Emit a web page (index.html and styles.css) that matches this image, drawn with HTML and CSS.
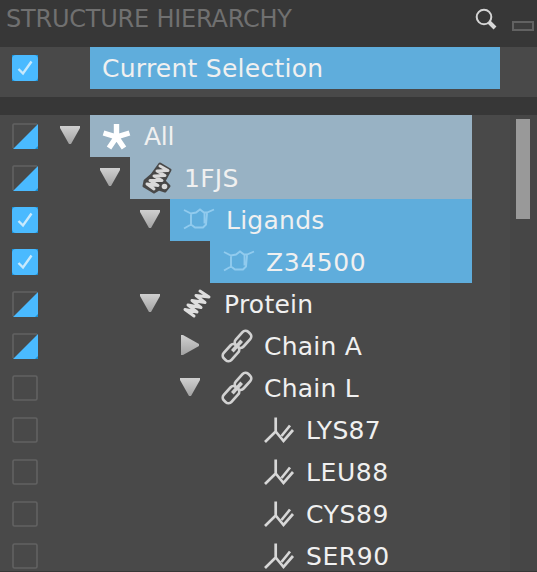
FILE: index.html
```
<!DOCTYPE html>
<html lang="en">
<head>
<meta charset="utf-8">
<title>Structure Hierarchy</title>
<link rel="stylesheet" href="styles.css">
</head>
<body>
<svg class="defs" width="0" height="0" aria-hidden="true">
  <defs>
    <linearGradient id="metal" x1="0" y1="0" x2="0" y2="1"><stop offset="0" stop-color="#d0d0d0"/><stop offset="1" stop-color="#a2a2a2"/></linearGradient>
    <symbol id="on" viewBox="0 0 26 26"><path fill="#168fd5" d="M0 0h26v26H0z"/><rect width="26" height="26" rx="4" fill="#4abaff"/><path d="M6.500 14l4.500 4.500L19.500 6.500" fill="none" stroke="#c8e9fc" stroke-width="2.400"/></symbol>
    <symbol id="off" viewBox="0 0 26 26"><rect x="1" y="1" width="24" height="24" rx="1.500" fill="none" stroke="#626262" stroke-width="1.600"/></symbol>
    <symbol id="part" viewBox="0 0 26 26"><path d="M1 25V2q0-1 1-1h23" fill="none" stroke="#626262" stroke-width="1.600"/><path d="M26 1v25H1z" fill="#4abaff"/><path d="M26 23v3h-3z" fill="#168fd5"/></symbol>
    <symbol id="down" viewBox="0 0 20 20"><path d="M0 1h20v2l-9 16H9L0 3z" fill="url(#metal)"/></symbol>
    <symbol id="right" viewBox="0 0 20 20"><path d="M1 0h2l16 9v2L3 20H1z" fill="url(#metal)"/></symbol>
    <symbol id="star" viewBox="0 0 32 32"><path d="M15.500 17V4M15.500 17L2.500 13M15.500 17L28.500 13M15.500 17L8 28M15.500 17L23 28" stroke="#fff" stroke-width="5.400"/></symbol>
    <symbol id="coil" class="spill" viewBox="0 0 32 32"><path id="helix" d="M19 3L28 9L15 7.500L24 14.500L11 12.500L20 19.500L7 17L16 24L4 21.500L13 28" fill="none" stroke="#dedede" stroke-width="3" stroke-linejoin="round" stroke-linecap="round"/></symbol>
    <symbol id="complex" class="spill" viewBox="0 0 32 32"><path d="M19 2L29 8L23 19L28 24L24 29L18 27L13 30L3 24L4 19L11 13Z" fill="#484848" stroke="#484848" stroke-width="3" stroke-linejoin="round"/><path d="M19 4L27 8.500L16 9L24 13.500L13 14L21 18.500L9 18.500L17 23.500L6 22L13 27" fill="none" stroke="#d9d9d9" stroke-width="3" stroke-linejoin="round" stroke-linecap="round"/><circle cx="23.500" cy="24.500" r="2.800" fill="#d9d9d9"/></symbol>
    <symbol id="ligand" class="spill" viewBox="0 0 32 32"><path d="M3 6l7 3.500 5-1 4-3 4 3h3l7-3M10 9.500v11l-7 4M10 20.500l4 3h8l3-3 1-11M23.500 9.500v10" fill="none" stroke="#91cbee" stroke-width="1.900"/></symbol>
    <symbol id="chain" class="spill" viewBox="0 0 32 32"><g transform="rotate(-48 16 16)" fill="none" stroke="#d2d2d2" stroke-width="2.700"><rect x="-2" y="10.800" width="18" height="10.400" rx="4"/><rect x="16" y="10.800" width="18" height="10.400" rx="4"/><path d="M9 16h14" stroke-width="3.600"/></g></symbol>
    <symbol id="residue" class="spill" viewBox="0 0 32 32"><path d="M14.700 3.500v14L4 28M14.700 17.500l7.800 9.500 9.500-11M20.500 22L29 11.500" fill="none" stroke="#d7d7d7" stroke-width="2.700"/></symbol>
  </defs>
</svg>
<main class="panel">
  <header class="header">
    <h1 class="title">STRUCTURE HIERARCHY</h1>
    <svg class="search" viewBox="0 0 24 24"><circle cx="10" cy="10" r="7.300" fill="none" stroke="#d4d4d4" stroke-width="2"/><path d="M15 15l6 6" stroke="#d8d8d8" stroke-width="4"/></svg>
    <span class="minimize"></span>
  </header>
  <section class="selection">
    <svg class="check"><use href="#on"/></svg>
    <div class="current"><span>Current Selection</span></div>
  </section>
  <section class="tree">
    <div class="rows">
      <div class="row l0"><svg class="check"><use href="#part"/></svg><svg class="arrow"><use href="#down"/></svg><div class="item pale"><svg class="icon"><use href="#star"/></svg><span class="tight">All</span></div></div>
      <div class="row l1"><svg class="check"><use href="#part"/></svg><svg class="arrow"><use href="#down"/></svg><div class="item pale"><svg class="icon"><use href="#complex"/></svg><span>1FJS</span></div></div>
      <div class="row l2"><svg class="check"><use href="#on"/></svg><svg class="arrow"><use href="#down"/></svg><div class="item blue"><svg class="icon"><use href="#ligand"/></svg><span class="shifted">Ligands</span></div></div>
      <div class="row l3"><svg class="check"><use href="#on"/></svg><span class="arrow"></span><div class="item blue"><svg class="icon"><use href="#ligand"/></svg><span class="shifted wide">Z34500</span></div></div>
      <div class="row l2"><svg class="check"><use href="#part"/></svg><svg class="arrow"><use href="#down"/></svg><div class="item"><svg class="icon"><use href="#coil"/></svg><span>Protein</span></div></div>
      <div class="row l3"><svg class="check"><use href="#part"/></svg><svg class="arrow"><use href="#right"/></svg><div class="item"><svg class="icon"><use href="#chain"/></svg><span>Chain A</span></div></div>
      <div class="row l3"><svg class="check"><use href="#off"/></svg><svg class="arrow"><use href="#down"/></svg><div class="item"><svg class="icon"><use href="#chain"/></svg><span>Chain L</span></div></div>
      <div class="row l4"><svg class="check"><use href="#off"/></svg><span class="arrow"></span><div class="item"><svg class="icon"><use href="#residue"/></svg><span class="shifted">LYS87</span></div></div>
      <div class="row l4"><svg class="check"><use href="#off"/></svg><span class="arrow"></span><div class="item"><svg class="icon"><use href="#residue"/></svg><span class="shifted wide">LEU88</span></div></div>
      <div class="row l4"><svg class="check"><use href="#off"/></svg><span class="arrow"></span><div class="item"><svg class="icon"><use href="#residue"/></svg><span class="shifted wide">CYS89</span></div></div>
      <div class="row l4"><svg class="check"><use href="#off"/></svg><span class="arrow"></span><div class="item"><svg class="icon"><use href="#residue"/></svg><span class="shifted wide">SER90</span></div></div>
    </div>
    <div class="scroll"><div class="thumb"></div></div>
  </section>
</main>
</body>
</html>
```
FILE: styles.css
```
* { box-sizing: border-box; }
body { margin: 0; background: #373737; overflow: hidden; font-family: "DejaVu Sans", sans-serif; font-size: 25px; color: #f0f0f0; }
svg { display: block; flex: none; }
.spill, .icon { overflow: visible; }
.defs { position: absolute; }
.panel { width: 537px; height: 572px; display: flex; flex-direction: column; overflow: hidden; }
.header { height: 47px; flex: none; display: flex; align-items: flex-start; padding-left: 6px; }
.title { margin: 5px 0 0; width: 468px; font-size: 24px; line-height: 29px; font-weight: 400; letter-spacing: -0.22px; color: #707070; white-space: nowrap; }
.search { width: 24px; height: 24px; margin: 7px 0 0 0; }
.minimize { width: 22px; height: 10px; margin: 21px 0 0 14px; border: 2px solid #626262; background: #3d3d3d; }
.selection { height: 50px; flex: none; display: flex; padding-left: 12px; background: #494949; }
.check { width: 26px; height: 26px; margin-top: 8px; flex: none; }
.current { height: 42px; width: 410px; margin-left: 52px; padding-left: 12px; background: #5faddc; line-height: 43px; letter-spacing: 0.25px; }
.tree { height: 456px; margin-top: 18px; flex: none; display: flex; overflow: hidden; background: #494949; }
.rows { width: 472px; margin-right: 38px; }
.row { height: 42px; display: flex; padding-left: 12px; }
.arrow { width: 20px; height: 20px; margin: 10px 10px 0 22px; flex: none; }
.l1 .arrow { margin-left: 62px; }
.l2 .arrow { margin-left: 102px; }
.l3 .arrow { margin-left: 142px; }
.l4 .arrow { margin-left: 182px; }
.item { height: 42px; flex: 1; display: flex; align-items: flex-start; padding-left: 11px; line-height: 43px; letter-spacing: 0.25px; white-space: nowrap; }
.item span { margin-left: 11px; }
.item .shifted { margin-left: 13px; }
.item .tight { letter-spacing: -0.3px; }
.item .wide { letter-spacing: 0.600px; }
.icon { width: 32px; height: 32px; margin-top: 5px; }
.pale { background: #98b2c4; }
.blue { background: #5faddc; }
.scroll { width: 27px; padding: 4px 0 0 6px; background: #464646; }
.thumb { width: 14px; height: 100px; background: #999; }
```
